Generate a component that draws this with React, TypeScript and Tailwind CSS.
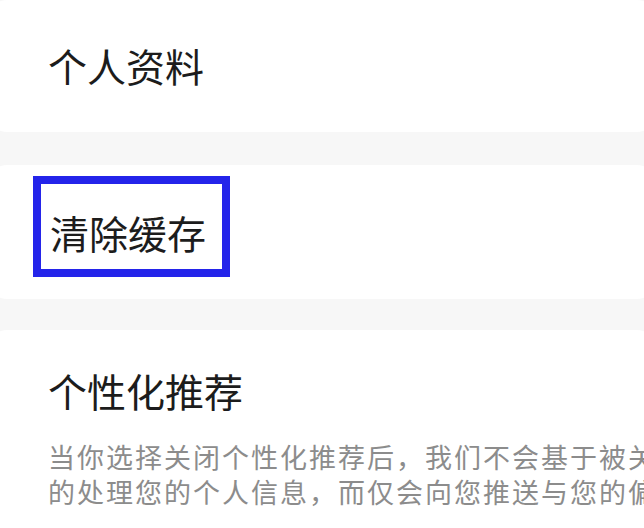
import React from "react";

const font = { fontFamily: '"Noto Sans CJK SC", "Noto Sans", sans-serif' };

export default function App() {
  return (
    <div
      className="w-[644px] h-[528px] overflow-hidden bg-[#f7f7f7] flex flex-col gap-[33px]"
      style={font}
    >
      <div className="-mx-4 h-[132px] shrink-0 rounded-[24px] bg-white pl-[64px] pt-[46px]">
        <div className="text-[39px] leading-[38px] text-[#1c1c1c]">个人资料</div>
      </div>
      <div className="-mx-4 h-[134px] shrink-0 rounded-[24px] bg-white pl-[49px] pt-[11px]">
        <div className="inline-block border-[8px] border-[#2424ea] pl-[9px] pr-[16px] pt-[29px] pb-[18px]">
          <div className="text-[39px] leading-[38px] text-[#1c1c1c]">清除缓存</div>
        </div>
      </div>
      <div className="-mx-4 mt-[-2px] h-[220px] shrink-0 rounded-[24px] bg-white pl-[64px] pt-[41px]">
        <div className="text-[39px] leading-[38px] text-[#1c1c1c]">个性化推荐</div>
        <div className="mt-[30px] w-[600px] overflow-hidden whitespace-nowrap text-[27px] leading-[35px] tracking-[2px] text-[#8c8c8c]">
          <div>当你选择关闭个性化推荐后，我们不会基于被关</div>
          <div>的处理您的个人信息，而仅会向您推送与您的偏</div>
        </div>
      </div>
    </div>
  );
}
